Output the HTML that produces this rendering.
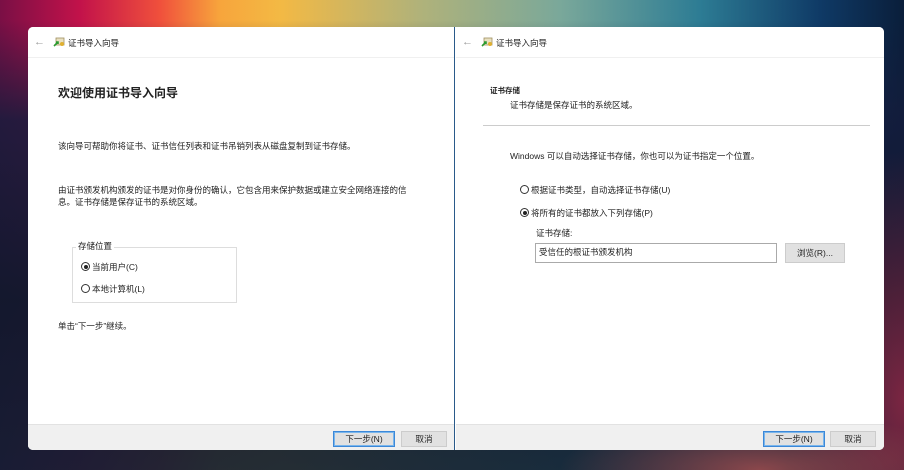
<!DOCTYPE html>
<html><head><meta charset="utf-8"><style>
*{margin:0;padding:0;box-sizing:border-box}
body{width:904px;height:470px;overflow:hidden;position:relative;font-family:"Liberation Sans","Noto Sans CJK SC",sans-serif;color:#222;
background:
radial-gradient(ellipse 200px 60px at 760px 470px,rgba(170,80,80,0.8),rgba(0,0,0,0)),
radial-gradient(ellipse 120px 250px at 904px 400px,rgba(150,40,70,0.8),rgba(0,0,0,0)),
linear-gradient(180deg,rgba(0,0,0,0) 0px,rgba(0,0,0,0) 20px,rgba(20,28,60,0.85) 120px,rgba(14,24,44,0.95) 300px,rgba(14,30,50,0.9) 470px),
linear-gradient(90deg,#7a0f45 0px,#c2124a 80px,#f0503c 160px,#f7a53c 220px,#f3b944 280px,#b0b27a 420px,#7aa89a 560px,#2d7c94 700px,#0f3a66 820px,#0a1e3a 904px);}
.win{position:absolute;left:28px;top:27px;width:856px;height:423px;background:#fff;border-radius:5px;overflow:hidden}
.pane{position:absolute;top:0;height:423px;background:#fff}
.title{position:absolute;top:0;left:0;right:0;height:31px;border-bottom:1px solid #f0f0f0;font-size:9px}
.foot{position:absolute;left:0;right:0;top:397px;height:26px;background:#f0f0f0;border-top:1px solid #e2e2e2}
.btn{position:absolute;top:6px;height:16px;border:1px solid #ccc;background:#e1e1e1;font-size:8.5px;text-align:center;line-height:14px}
.btn.p{border:1px solid #3c88d8;box-shadow:inset 0 0 0 1px #7ab6ec}
.t{position:absolute;font-size:8.5px;white-space:nowrap;line-height:12px}
.radio{display:inline-block;width:9px;height:9px;border:1px solid #333;border-radius:50%;vertical-align:-1px;margin-right:2px;position:relative}
.radio.on::after{content:"";position:absolute;left:1.5px;top:1.5px;width:4px;height:4px;border-radius:50%;background:#222}
.arrow{position:absolute;left:6px;top:9px;font-size:11px;color:#999}
.ico{position:absolute;left:25px;top:10px;width:12px;height:11px}
</style></head><body>
<div class="win">
 <div class="pane" style="left:0;width:427px;border-right:1px solid #2a5a8a">
  <div class="title"><span class="arrow">←</span>
   <svg class="ico" viewBox="0 0 12 11"><rect x="3" y="1" width="8" height="7" fill="#e8e0c0" stroke="#a09060" stroke-width=".8"/><path d="M1 9 L5 5 M3 5 L5 5 L5 7" stroke="#2a9a30" stroke-width="1.6" fill="none"/><circle cx="9" cy="7" r="2" fill="#e0b030"/></svg>
   <span class="t" style="left:40px;top:10px;font-size:8.5px">证书导入向导</span></div>
  <div class="t" style="left:30px;top:59px;font-size:12px;font-weight:bold;line-height:14px">欢迎使用证书导入向导</div>
  <div class="t" style="left:30px;top:113px">该向导可帮助你将证书、证书信任列表和证书吊销列表从磁盘复制到证书存储。</div>
  <div class="t" style="left:30px;top:157px">由证书颁发机构颁发的证书是对你身份的确认，它包含用来保护数据或建立安全网络连接的信</div>
  <div class="t" style="left:30px;top:169px">息。证书存储是保存证书的系统区域。</div>
  <div style="position:absolute;left:44px;top:220px;width:165px;height:56px;border:1px solid #ddd"></div>
  <div class="t" style="left:48px;top:213px;background:#fff;padding:0 2px">存储位置</div>
  <div class="t" style="left:53px;top:234px"><span class="radio on"></span>当前用户(C)</div>
  <div class="t" style="left:53px;top:256px"><span class="radio"></span>本地计算机(L)</div>
  <div class="t" style="left:30px;top:293px">单击“下一步”继续。</div>
  <div class="foot"><div class="btn p" style="left:305px;width:62px">下一步(N)</div><div class="btn" style="left:373px;width:46px">取消</div></div>
 </div>
 <div class="pane" style="left:428px;width:428px">
  <div class="title"><span class="arrow">←</span>
   <svg class="ico" viewBox="0 0 12 11"><rect x="3" y="1" width="8" height="7" fill="#e8e0c0" stroke="#a09060" stroke-width=".8"/><path d="M1 9 L5 5 M3 5 L5 5 L5 7" stroke="#2a9a30" stroke-width="1.6" fill="none"/><circle cx="9" cy="7" r="2" fill="#e0b030"/></svg>
   <span class="t" style="left:40px;top:10px;font-size:8.5px">证书导入向导</span></div>
  <div class="t" style="left:34px;top:58px;font-size:7.5px;font-weight:bold">证书存储</div>
  <div class="t" style="left:54px;top:72px">证书存储是保存证书的系统区域。</div>
  <div style="position:absolute;left:27px;top:98px;width:387px;height:1px;background:#ccc"></div>
  <div class="t" style="left:54px;top:123px">Windows 可以自动选择证书存储，你也可以为证书指定一个位置。</div>
  <div class="t" style="left:64px;top:157px"><span class="radio"></span>根据证书类型，自动选择证书存储(U)</div>
  <div class="t" style="left:64px;top:180px"><span class="radio on"></span>将所有的证书都放入下列存储(P)</div>
  <div class="t" style="left:80px;top:200px">证书存储:</div>
  <div style="position:absolute;left:79px;top:216px;width:242px;height:20px;border:1px solid #aaa"></div>
  <div class="t" style="left:83px;top:219px">受信任的根证书颁发机构</div>
  <div class="btn" style="left:329px;top:216px;width:60px;height:20px;line-height:18px">浏览(R)...</div>
  <div class="foot"><div class="btn p" style="left:307px;width:62px">下一步(N)</div><div class="btn" style="left:374px;width:46px">取消</div></div>
 </div>
</div>
</body></html>
